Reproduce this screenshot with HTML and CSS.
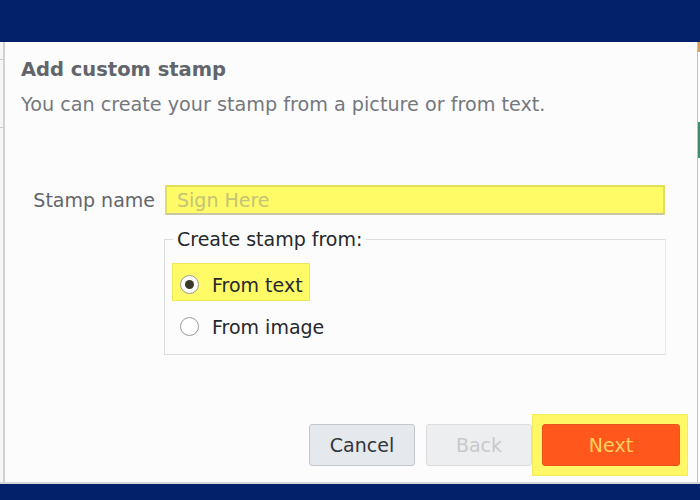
FILE: index.html
```html
<!DOCTYPE html>
<html dir="ltr" lang="en">
<head>
	<meta charset="UTF-8">
	<meta name="viewport" content="width=device-width">
	<title>Add custom stamp</title>
	<link rel="stylesheet" href="styles.css">
</head>
<body>
<div class="topbar"></div>
<div class="middle">
	<div class="leftedge">
		<span class="tick t1"></span>
		<span class="tick t2"></span>
	</div>
	<div class="dialog">
		<h1 class="title">Add custom stamp</h1>
		<p class="subtitle">You can create your stamp from a picture or from text.</p>

		<div class="namerow">
			<label class="namelabel" for="stampname">Stamp name</label>
			<input type="text" id="stampname" class="nameinput" placeholder="Sign Here">
		</div>

		<fieldset class="source">
			<legend>Create stamp from:</legend>
			<div class="option marked">
				<span class="radio checked"></span>
				<span>From text</span>
			</div>
			<div class="option">
				<span class="radio"></span>
				<span>From image</span>
			</div>
		</fieldset>

		<div class="buttons">
			<button class="btn">Cancel</button>
			<button class="btn" disabled>Back</button>
			<span class="marker"><button class="btn next">Next</button></span>
		</div>
	</div>
	<div class="rightedge">
		<span class="tab orange"></span>
		<span class="tab green"></span>
	</div>
</div>
<div class="bottombar"></div>
</body>
</html>
```

FILE: styles.css
```css
html { height: 100%; }

body {
	margin: 0;
	height: 100%;
	display: flex;
	flex-direction: column;
	font-family: "DejaVu Sans", Verdana, sans-serif;
	background: #fcfcfc;
	overflow: hidden;
}

.topbar {
	height: 42px;
	background: #03206a;
}

.bottombar {
	height: 16px;
	background: #03206a;
}

.middle {
	flex: 1;
	display: flex;
	border-bottom: 2px solid #d6d6d6;
}

.leftedge {
	width: 3px;
	border-right: 2px solid #cfd1d3;
	background: #f6f6f6;
	display: flex;
	flex-direction: column;
}

.tick {
	display: block;
	height: 1px;
	background: #c8c8c8;
}

.t1 { margin-top: 17px; }
.t2 { margin-top: 67px; }

.rightedge {
	width: 2px;
	border-left: 1px solid #c4c4c4;
	display: flex;
	flex-direction: column;
}

.tab { display: block; }
.orange { height: 10px; background: #d9a05a; }
.green { height: 36px; margin-top: 70px; background: #3f8a6a; }

.dialog {
	flex: 1;
	padding: 0 0 0 16px;
}

.title {
	margin: 15px 0 0 0;
	font-size: 19.5px;
	font-weight: bold;
	color: #62656b;
	line-height: 26px;
}

.subtitle {
	margin: 10px 0 0 0;
	font-size: 19.2px;
	color: #74787e;
	line-height: 24px;
}

.namerow {
	display: flex;
	align-items: center;
	margin-top: 68px;
}

.namelabel {
	width: 134px;
	padding-right: 10px;
	text-align: right;
	font-size: 19px;
	color: #62666c;
}

.nameinput {
	width: 500px;
	height: 30px;
	box-sizing: border-box;
	margin: 0;
	padding: 0 10px;
	font-family: "DejaVu Sans", Verdana, sans-serif;
	font-size: 19px;
	background: #fffb66;
	border: 2px solid #e3df5a;
	border-bottom-color: #c9c7a8;
	outline: none;
}

.nameinput::placeholder { color: #c2c479; }

.source {
	margin: 13px 0 0 143px;
	width: 502px;
	box-sizing: border-box;
	padding: 14px 0 12px 8px;
	border: 1px solid #dcdcdc;
	border-right-color: #e8e8e8;
}

.source legend {
	padding: 0 4px;
	font-size: 19px;
	line-height: 22px;
	color: #26282b;
}

.option {
	display: flex;
	width: max-content;
	box-sizing: border-box;
	align-items: center;
	gap: 13px;
	height: 36px;
	padding: 5px 6px 0 7px;
	font-size: 19px;
	color: #26282b;
}

.option + .option { margin-top: 6px; }

.marked {
	background: #fffb66;
	outline: 1px solid #eee858;
}

.radio {
	width: 19px;
	height: 19px;
	box-sizing: border-box;
	border: 1px solid #9a9a9a;
	border-radius: 50%;
	background: #fff;
	display: flex;
	align-items: center;
	justify-content: center;
}

.radio.checked::after {
	content: "";
	width: 9px;
	height: 9px;
	border-radius: 50%;
	background: #3a3a2a;
}

.buttons {
	display: flex;
	justify-content: flex-end;
	align-items: center;
	gap: 11px;
	margin: 59px 9px 0 0;
}

.btn {
	width: 106px;
	height: 42px;
	font-family: "DejaVu Sans", Verdana, sans-serif;
	font-size: 19px;
	color: #33363a;
	background: #e5e8ec;
	border: 1px solid #c3c7cc;
	border-radius: 3px;
}

.btn:disabled {
	color: #c7c9cc;
	background: #eceef0;
	border-color: #dadcdf;
}

.marker {
	display: block;
	margin-left: -11px;
	padding: 9px 7px 9px 9px;
	background: #fff766;
	border: 1px solid #f2ec5a;
}

.next {
	width: 138px;
	color: #ffd25e;
	background: #ff571c;
	border-color: #e9541c;
}
```
